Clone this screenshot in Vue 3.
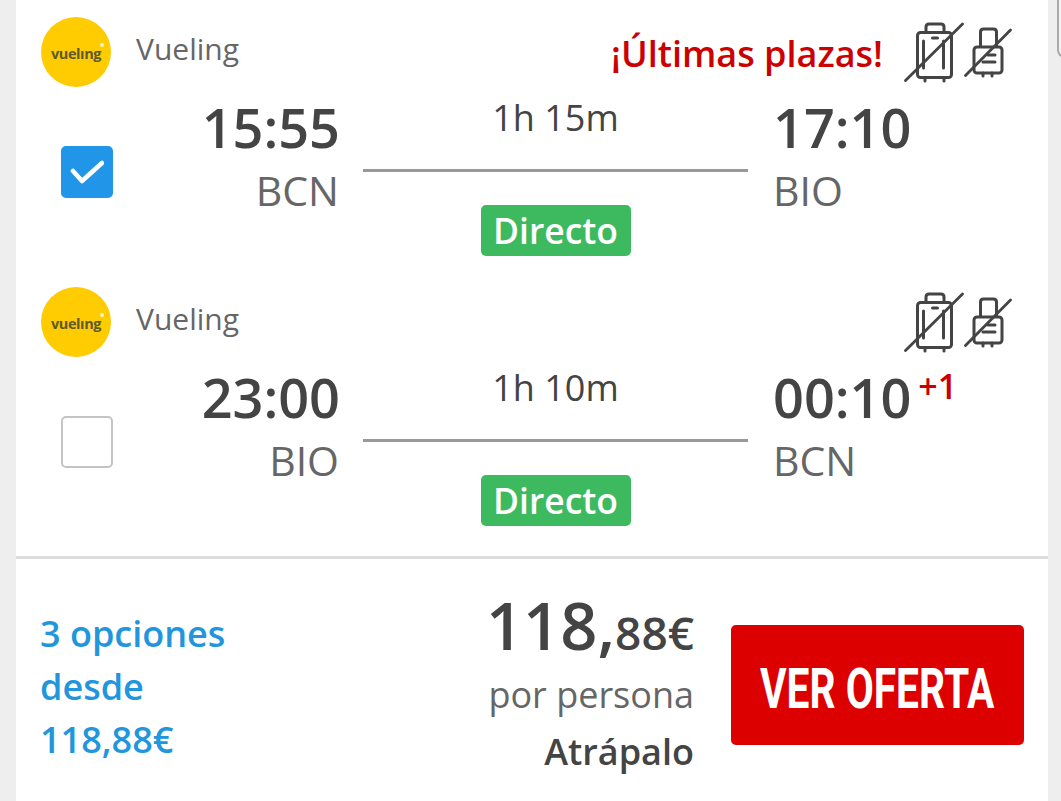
<template>
  <div class="page">
    <div class="card">
      <div v-for="flight in flights" :key="flight.depTime" class="flight">
        <div class="top">
          <div class="logo"><span>vuelıng</span><i class="dot"></i></div>
          <div class="airline">Vueling</div>
          <div class="top-right">
            <span v-if="flight.lastSeats" class="last">¡Últimas plazas!</span>
            <svg class="bags" width="108" height="62" viewBox="0 0 108 62" fill="none" stroke="#444" stroke-width="3" stroke-linecap="round" stroke-linejoin="round">
              <rect x="13.500" y="11.500" width="34" height="45" rx="3" />
              <path d="M22 10V6q0-3 3-3h12q3 0 3 3v4M19.500 20v27M39.500 20v27M28.500 17h5M21 57v3M40 57v3" />
              <path d="M1.500 59.500 58.500 3" stroke-width="2.800" />
              <rect x="70" y="26" width="28" height="26" rx="3" />
              <path d="M76.500 25V11q0-3 3-3h10q3 0 3 3v14M84 34h7M79 41h12M79 52v3M88 52v3" />
              <path d="M61.500 54.500 106.500 9" stroke-width="2.800" />
            </svg>
          </div>
        </div>
        <div class="route">
          <div class="check-cell">
            <div class="check" :class="{ on: flight.checked }">
              <svg v-if="flight.checked" width="34" height="28" viewBox="0 0 34 28" fill="none" stroke="#fff" stroke-width="4.500" stroke-linecap="round" stroke-linejoin="round">
                <path d="M3 13 12 23 32 5" />
              </svg>
            </div>
          </div>
          <div class="end dep">
            <div class="time">{{ flight.depTime }}</div>
            <div class="code">{{ flight.from }}</div>
          </div>
          <div class="mid">
            <div class="duration">{{ flight.duration }}</div>
            <div class="line"></div>
            <div class="direct">Directo</div>
          </div>
          <div class="end arr">
            <div class="time">{{ flight.arrTime }}<sup v-if="flight.plus" class="plus">{{ flight.plus }}</sup></div>
            <div class="code">{{ flight.to }}</div>
          </div>
        </div>
      </div>
      <div class="footer">
        <div class="options">3 opciones<br />desde<br />118,88€</div>
        <div class="price">
          <div class="amount">118,<small>88€</small></div>
          <div class="per">por persona</div>
          <div class="seller">Atrápalo</div>
        </div>
        <button class="cta"><span>VER OFERTA</span></button>
      </div>
    </div>
    <div class="edge"></div>
  </div>
</template>

<script setup>
const flights = [
  { depTime: '15:55', from: 'BCN', arrTime: '17:10', to: 'BIO', duration: '1h 15m', checked: true, lastSeats: true },
  { depTime: '23:00', from: 'BIO', arrTime: '00:10', to: 'BCN', duration: '1h 10m', checked: false, plus: '+1' }
]
</script>

<style>
html, body {
  margin: 0;
  background: #eee;
}
</style>

<style scoped>
.page {
  position: relative;
  width: 1061px;
  height: 801px;
  overflow: hidden;
  background: #eee;
  font-family: "Open Sans", "Noto Sans", sans-serif;
  color: #444;
}

.card {
  width: 1032px;
  height: 801px;
  margin-left: 16px;
  background: #fff;
  padding-top: 17px;
  box-sizing: border-box;
}

.flight {
  height: 270px;
}

.top {
  display: flex;
  align-items: flex-start;
  height: 70px;
  padding-left: 25px;
}

.logo {
  position: relative;
  width: 70px;
  height: 70px;
  border-radius: 50%;
  background: #fecc00;
  display: flex;
  align-items: center;
  justify-content: center;
  flex-shrink: 0;
}

.logo span {
  font-weight: 700;
  font-size: 14.500px;
  letter-spacing: -0.4px;
  color: #5f5a2c;
  position: relative;
  top: 1px;
}

.dot {
  position: absolute;
  left: 59px;
  top: 26px;
  width: 4px;
  height: 4px;
  border-radius: 50%;
  background: #fff6c4;
}

.airline {
  margin-left: 25px;
  font-size: 30px;
  line-height: 64px;
  color: #666;
}

.top-right {
  margin-left: auto;
  display: flex;
  align-items: flex-start;
  padding-right: 36px;
  margin-top: 4px;
}

.last {
  font-size: 36px;
  font-weight: 600;
  color: #cc0000;
  line-height: 66px;
  margin-right: 21px;
}

.bags {
  display: block;
}

.route {
  display: grid;
  grid-template-columns: 156px 143px 433px 1fr;
  margin-left: 25px;
}

.check-cell {
  padding: 59px 0 0 20px;
}

.check {
  width: 52px;
  height: 52px;
  box-sizing: border-box;
  border-radius: 5px;
  border: 2px solid #c4c4c4;
  background: #fff;
  display: flex;
  align-items: center;
  justify-content: center;
}

.check.on {
  background: #2196e8;
  border-color: #2196e8;
}

.end {
  margin-top: 7px;
}

.dep {
  text-align: right;
}

.dep .code {
  margin-right: 1px;
}

.time {
  font-size: 54px;
  font-weight: 600;
  line-height: 66px;
  color: #444;
  white-space: nowrap;
}

.plus {
  font-size: 34px;
  font-weight: 600;
  color: #cc0000;
  line-height: 0;
  vertical-align: baseline;
  position: relative;
  top: -19px;
  margin-left: 7px;
}

.code {
  font-size: 41px;
  line-height: 60px;
  color: #666;
}

.mid {
  display: flex;
  flex-direction: column;
  align-items: center;
  padding: 0 25px 0 23px;
}

.duration {
  font-size: 36px;
  line-height: 46px;
  margin-top: 8px;
}

.line {
  align-self: stretch;
  height: 3px;
  background: #999;
  margin-top: 28px;
}

.direct {
  margin-top: 33px;
  width: 150px;
  height: 51px;
  border-radius: 5px;
  background: #3dba5f;
  color: #fff;
  font-size: 35.500px;
  font-weight: 600;
  line-height: 51px;
  text-align: center;
}

.footer {
  display: flex;
  align-items: flex-start;
  border-top: 3px solid #ddd;
  margin-top: -1px;
  height: 240px;
  padding-left: 24px;
}

.options {
  width: 421px;
  margin-top: 48px;
  font-size: 36px;
  font-weight: 600;
  line-height: 53px;
  color: #2196dc;
}

.price {
  width: 233px;
  text-align: right;
  margin-top: 26px;
  white-space: nowrap;
}

.amount {
  font-size: 65px;
  font-weight: 600;
  line-height: 80px;
}

.amount small {
  font-size: 46px;
  font-weight: 600;
}

.per {
  font-size: 36px;
  line-height: 46px;
  color: #666;
}

.seller {
  font-size: 36px;
  font-weight: 600;
  line-height: 46px;
  margin-top: 11px;
}

.cta {
  margin: 66px 0 0 37px;
  width: 293px;
  height: 120px;
  border: 0;
  border-radius: 5px;
  background: #dd0000;
  color: #fff;
  padding: 8px 0 0;
  display: flex;
  align-items: center;
  justify-content: center;
  font-family: "Roboto", "Liberation Sans", sans-serif;
  font-weight: 700;
  font-size: 56px;
}

.cta span {
  display: inline-block;
  transform: scaleX(0.727);
  white-space: nowrap;
}

.edge {
  position: absolute;
  left: 1057px;
  top: -20px;
  width: 20px;
  height: 76px;
  border-left: 2px solid #aaa;
  border-bottom: 2px solid #aaa;
  border-radius: 8px;
  background: #f2f2f2;
}
</style>
